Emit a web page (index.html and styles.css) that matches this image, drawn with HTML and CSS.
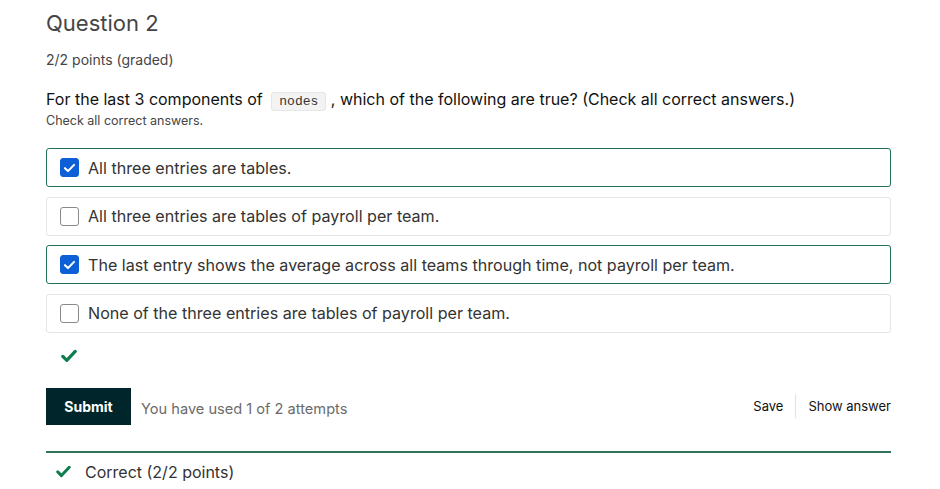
FILE: index.html
```html
<!DOCTYPE html>
<html>
<head>
<meta charset="utf-8">
<link rel="stylesheet" href="styles.css">
</head>
<body>
<div class="problem">
  <h3 class="title">Question 2</h3>
  <div class="points">2/2 points (graded)</div>
  <p class="prompt">For the last 3 components of <code class="code">nodes</code> , which of the following are true? (Check all correct answers.)</p>
  <div class="hint">Check all correct answers.</div>
  <div class="options">
    <label class="option selected"><span class="box checked"><svg viewBox="0 0 18 18" width="18" height="18"><path d="M4.2 9.2l3.2 3.1 6.4-6.6" fill="none" stroke="#fff" stroke-width="2.2" stroke-linecap="round" stroke-linejoin="round"/></svg></span><span class="otext">All three entries are tables.</span></label>
    <label class="option"><span class="box"></span><span class="otext">All three entries are tables of payroll per team.</span></label>
    <label class="option selected"><span class="box checked"><svg viewBox="0 0 18 18" width="18" height="18"><path d="M4.2 9.2l3.2 3.1 6.4-6.6" fill="none" stroke="#fff" stroke-width="2.2" stroke-linecap="round" stroke-linejoin="round"/></svg></span><span class="otext">The last entry shows the average across all teams through time, not payroll per team.</span></label>
    <label class="option"><span class="box"></span><span class="otext">None of the three entries are tables of payroll per team.</span></label>
  </div>
  <div class="status"><svg viewBox="0 0 16 14" width="16" height="14"><path d="M1.8 7.4l4 4 8.4-9" fill="none" stroke="#0d7d4d" stroke-width="3.2" stroke-linecap="round" stroke-linejoin="round"/></svg></div>
  <div class="actions">
    <div class="left">
      <button class="submit">Submit</button>
      <span class="attempts">You have used 1 of 2 attempts</span>
    </div>
    <div class="right">
      <span class="link">Save</span>
      <span class="sep"></span>
      <span class="link">Show answer</span>
    </div>
  </div>
  <div class="notification">
    <svg viewBox="0 0 16 14" width="15" height="13"><path d="M1.8 7.4l4 4 8.4-9" fill="none" stroke="#0d7d4d" stroke-width="3.2" stroke-linecap="round" stroke-linejoin="round"/></svg>
    <span class="ntext">Correct (2/2 points)</span>
  </div>
</div>
</body>
</html>
```

FILE: styles.css
```css
* { box-sizing: border-box; }
html, body { margin: 0; padding: 0; background: #fff; }
body { font-family: Inter, "Noto Sans", sans-serif; color: #454545; }
.problem { padding: 9px 50px 0 46px; width: 940px; }
.title { margin: 0; font-size: 22px; font-weight: 400; color: #454545; line-height: 28px; }
.points { margin-top: 14px; font-size: 14px; color: #454545; line-height: 18px; }
.prompt { margin: 19px 0 0; font-size: 16px; color: #111; line-height: 22px; }
.code { font-family: "Liberation Mono", "DejaVu Sans Mono", monospace; font-size: 13px; background: #f3f3f3; border: 1px solid #e6e6e6; border-radius: 3px; padding: 1px 7px; margin-left: 4px; color: #333; }
.hint { font-size: 12.5px; color: #454545; line-height: 16px; margin-top: 0; }
.options { margin-top: 19px; display: flex; flex-direction: column; gap: 9.5px; width: 845px; }
.option { display: flex; align-items: center; height: 39px; border: 1px solid #e5e5e5; border-radius: 3px; padding-left: 13px; }
.option.selected { border-color: #23705a; }
.box { width: 19px; height: 19px; border: 1px solid #8a8a8a; border-radius: 3px; flex: none; display: flex; align-items: center; justify-content: center; background: #fff; }
.box.checked { background: #0c5fd6; border-color: #0c5fd6; }
.otext { margin-left: 9px; font-size: 16.1px; color: #333; }
.status { margin-top: 14px; padding-left: 15px; height: 14px; }
.actions { margin-top: 27px; display: flex; justify-content: space-between; align-items: center; width: 845px; }
.left { display: flex; align-items: center; }
.submit { background: #00262b; color: #fff; font-family: Inter, sans-serif; font-weight: 700; font-size: 14px; border: none; border-radius: 0; width: 85px; height: 37px; padding: 0; }
.attempts { margin-left: 10px; font-size: 14.6px; color: #6b6b6b; margin-top: 6px; }
.right { display: flex; align-items: center; }
.link { font-size: 13px; color: #111; }
.sep { width: 1px; height: 24px; background: #e2e2e2; margin: 0 12px; }
.notification { margin-top: 26px; border-top: 2px solid #2d7358; width: 845px; display: flex; align-items: center; padding: 9px 0 0 10px; }
.ntext { margin-left: 14px; font-size: 16px; color: #333; }
```
